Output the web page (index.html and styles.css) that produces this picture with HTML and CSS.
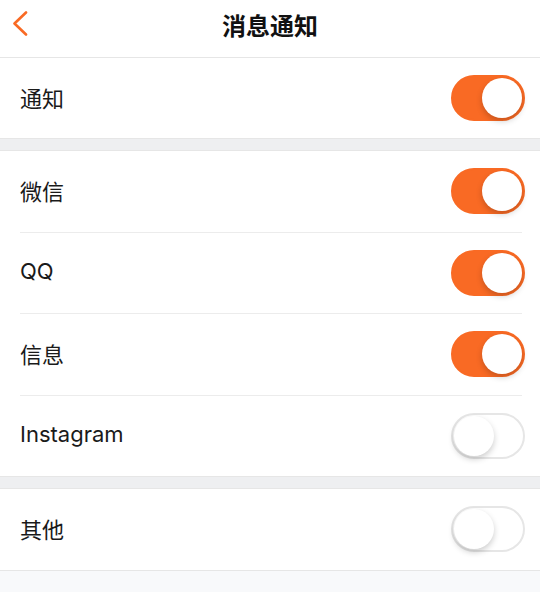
FILE: index.html
```html
<!DOCTYPE html>
<html>
  <head>
    <meta charset="utf-8">
    <title>消息通知</title>
    <link rel="stylesheet" href="styles.css">
  </head>
  <body>
    <div class="header">
      <a class="back" href="#">
        <svg width="18" height="26" viewBox="0 0 18 26">
          <path d="M15 1.5 L3.5 12.5 L15 23.5" fill="none" stroke="#f96a24" stroke-width="2.6" stroke-linecap="round" stroke-linejoin="round"/>
        </svg>
      </a>
      <h1>消息通知</h1>
    </div>

    <div class="group first">
      <div class="row">
        <span class="label">通知</span>
        <span class="switch on"><span class="knob"></span></span>
      </div>
    </div>

    <div class="gap"></div>

    <div class="group">
      <div class="row">
        <span class="label">微信</span>
        <span class="switch on"><span class="knob"></span></span>
      </div>
      <div class="row">
        <span class="label">QQ</span>
        <span class="switch on"><span class="knob"></span></span>
      </div>
      <div class="row">
        <span class="label">信息</span>
        <span class="switch on"><span class="knob"></span></span>
      </div>
      <div class="row">
        <span class="label">Instagram</span>
        <span class="switch"><span class="knob"></span></span>
      </div>
    </div>

    <div class="gap"></div>

    <div class="group">
      <div class="row">
        <span class="label">其他</span>
        <span class="switch"><span class="knob"></span></span>
      </div>
    </div>
  </body>
</html>
```

FILE: styles.css
```css
body {
  margin: 0;
  background-color: #f8f9fb;
  color: #1a1a1a;
  font-family: Inter, "Noto Sans CJK SC", sans-serif;
}
.header {
  position: relative;
  height: 48px;
  padding-bottom: 9px;
  display: flex;
  align-items: center;
  justify-content: center;
  background-color: #ffffff;
  border-bottom: 1px solid #e6e6e6;
}
.header h1 {
  margin: 0;
  font-family: "Noto Sans CJK SC", sans-serif;
  font-size: 24px;
  font-weight: bold;
  color: #111111;
}
.back {
  position: absolute;
  left: 11px;
  top: 11px;
  display: block;
  width: 18px;
  height: 26px;
}
.gap {
  height: 11px;
  background-color: #eeeff1;
}
.group {
  background-color: #ffffff;
  border-top: 1px solid #e6e6e6;
  border-bottom: 1px solid #e6e6e6;
}
.group.first {
  border-top: none;
}
.row {
  height: 80.5px;
  margin: 0 18px 0 20px;
  display: flex;
  align-items: center;
  justify-content: space-between;
  border-bottom: 1px solid #ececec;
}
.group.first .row {
  height: 80px;
}
.row:last-child {
  border-bottom: none;
}
.label {
  font-size: 22px;
  margin-top: -3px;
}
.switch {
  position: relative;
  width: 70px;
  height: 42px;
  border-radius: 23px;
  border: 2px solid #e6e6e6;
  background-color: #ffffff;
  margin-right: -3px;
}
.switch.on {
  background-color: #f96a24;
  border-color: #f96a24;
}
.knob {
  position: absolute;
  top: 1px;
  left: 1px;
  width: 40px;
  height: 40px;
  border-radius: 50%;
  background-color: #ffffff;
  box-shadow: 0 3px 6px rgba(0, 0, 0, 0.2);
}
.switch.on .knob {
  left: 29px;
}
```
